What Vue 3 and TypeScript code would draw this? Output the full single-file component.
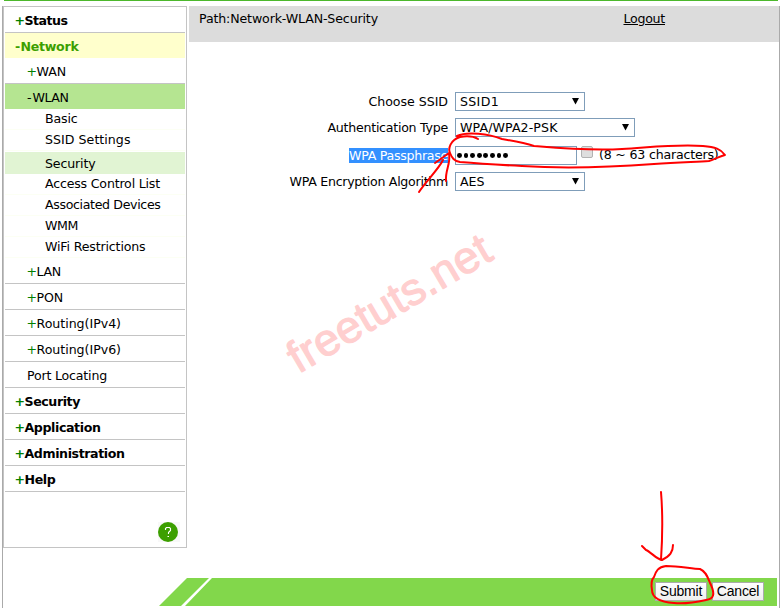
<script setup lang="ts">
interface NavItem {
  label: string
  mark?: string
  kind: string
  width: number
}

const nav: NavItem[] = [
  { mark: '+', label: 'Status', kind: 'top', width: 43 },
  { mark: '-', label: 'Network', kind: 'top open', width: 58 },
  { mark: '+', label: 'WAN', kind: 'sub', width: 29.5 },
  { mark: '-', label: 'WLAN', kind: 'sub active', width: 36 },
  { label: 'Basic', kind: 'leaf', width: 32.5 },
  { label: 'SSID Settings', kind: 'leaf', width: 85.5 },
  { label: 'Security', kind: 'leaf selected', width: 50.5 },
  { label: 'Access Control List', kind: 'leaf', width: 115 },
  { label: 'Associated Devices', kind: 'leaf', width: 115.5 },
  { label: 'WMM', kind: 'leaf', width: 33 },
  { label: 'WiFi Restrictions', kind: 'leaf', width: 100.5 },
  { mark: '+', label: 'LAN', kind: 'sub', width: 24.5 },
  { mark: '+', label: 'PON', kind: 'sub', width: 26.5 },
  { mark: '+', label: 'Routing(IPv4)', kind: 'sub', width: 84.5 },
  { mark: '+', label: 'Routing(IPv6)', kind: 'sub', width: 84.5 },
  { label: 'Port Locating', kind: 'sub', width: 80 },
  { mark: '+', label: 'Security', kind: 'top', width: 55.5 },
  { mark: '+', label: 'Application', kind: 'top', width: 76 },
  { mark: '+', label: 'Administration', kind: 'top', width: 100 },
  { mark: '+', label: 'Help', kind: 'top', width: 31 },
]

// Spreads the letters of a text so that it takes up the given width.
const vFit = {
  mounted(el: HTMLElement, binding: { value: number }) {
    const count = (el.textContent ?? '').length
    const natural = el.getBoundingClientRect().width
    if (count > 0) el.style.letterSpacing = `${(binding.value - natural) / count}px`
  },
}
</script>

<template>
  <div class="page">
    <div class="topline"></div>
    <div class="body">
      <aside class="sidebar">
        <nav>
          <div v-for="(item, i) in nav" :key="i" class="row" :class="item.kind">
            <span v-if="item.mark" class="mark" :class="{ minus: item.mark === '-' }">{{ item.mark }}</span><span v-fit="item.width">{{ item.label }}</span>
          </div>
        </nav>
        <div class="help">
          <svg width="22" height="20" viewBox="0 0 22 20">
            <rect width="22" height="20" fill="#f8f8f8" />
            <circle cx="10" cy="10" r="10" fill="#3c9f00" />
            <path d="M7.500 8V6.500L8.500 5.500H11.500L12.500 6.500V8.500L10.500 10.500V12M9.500 14.500H11" fill="none" stroke="#fff" stroke-width="1.100" />
          </svg>
        </div>
      </aside>
      <main class="content">
        <header class="path">
          <span v-fit="179">Path:Network-WLAN-Security</span>
          <a v-fit="41.5" class="logout">Logout</a>
        </header>
        <form class="form">
          <label class="label"><span v-fit="79.5">Choose SSID</span></label>
          <div class="field select"><span v-fit="39">SSID1</span><i class="arrow"></i></div>
          <label class="label"><span v-fit="120.5">Authentication Type</span></label>
          <div class="field select wide"><span v-fit="97.5">WPA/WPA2-PSK</span><i class="arrow"></i></div>
          <label class="label"><span v-fit="99" class="hl">WPA Passphrase</span></label>
          <div class="pass">
            <div class="field input"><i v-for="n in 8" :key="n" class="dot"></i></div>
            <span class="check"></span>
            <span v-fit="119.5" class="hint">(8 ~ 63 characters)</span>
          </div>
          <label class="label"><span v-fit="158.5">WPA Encryption Algorithm</span></label>
          <div class="field select"><span v-fit="24.5">AES</span><i class="arrow"></i></div>
        </form>
      </main>
    </div>
    <footer class="footer">
      <svg class="slashes" width="54" height="28" viewBox="0 0 54 28">
        <path d="M0 28L28 0H50L22 28ZM26 28L53 0H54V28Z" fill="#82d74b" />
      </svg>
      <div class="bar">
        <button type="button" class="submit"><span v-fit="42.5">Submit</span></button>
        <button type="button" class="cancel"><span v-fit="42.5">Cancel</span></button>
      </div>
    </footer>
    <svg class="overlay" width="780" height="608" viewBox="0 0 780 608">
      <text class="watermark" transform="translate(298.500 374) rotate(-30.500)" textLength="228" lengthAdjust="spacing">freetuts.net</text>
      <g class="ink">
        <path d="M478 139C473 136 466 136 460 137C450 140 448 149 450 153C452 158 454 161 460 162C483 164 502 165 522 166C568 169 613 167 654 164C679 162 697 162 709 161C716 159 720 156 725 155C721 149 715 147 703 146C678 144 654 147 622 149C591 151 558 148 534 146C525 143 514 141 502 139C489 134 467 131 457 136" />
        <path d="M419 192C426 181 438 170 443 160M435 163L449 153C451 164 445 170 446 181" />
        <path d="M661 492C663 516 662 545 661 560M642 546L646 550C651 552 656 559 662 560C670 556 673 552 673 545" />
        <path d="M654 577C656 571 658 567 666 566C680 566 692 569 700 569C707 572 708 579 711 585C715 594 714 599 706 600C697 602 683 604 674 603C661 602 652 599 652 590C651 584 652 579 654 577Z" />
      </g>
    </svg>
  </div>
</template>

<style>
html, body { margin: 0; background: #fff; overflow: hidden; }
</style>

<style scoped>
* { box-sizing: border-box; }
.page {
  position: relative;
  width: 780px;
  height: 608px;
  overflow: hidden;
  background: #fff;
  font: 12.6px/20px "DejaVu Sans", Verdana, sans-serif;
  color: #000;
  display: flex;
  flex-direction: column;
  white-space: nowrap;
}
.topline { height: 1px; margin: 0 2px 5px 4px; background: #4cb82c; flex: none; }
.body {
  display: flex;
  height: 572px;
  flex: none;
  margin-left: 2px;
  border-left: 1px solid #aaa;
  border-right: 1px solid #aaa;
}
.sidebar {
  width: 184px;
  height: 542px;
  border: 1px solid #c4c4c4;
  padding: 0 1px;
  display: flex;
  flex-direction: column;
}
.row {
  height: 26px;
  line-height: 27px;
  border-bottom: 1px solid #c4c4c4;
  overflow: hidden;
}
.top { padding-left: 10px; font-weight: bold; }
.mark { display: inline-block; width: 9.5px; color: #008000; }
.sub .mark:not(.minus) { text-indent: -0.5px; }
.top .mark:not(.minus) { text-indent: -0.5px; }
.mark.minus { width: 5.5px; }
.open { background: #ffc; color: #3c9f00; border: 0; height: 25px; }
.open .mark { color: #3c9f00; }
.sub { padding-left: 22px; }
.sub .minus { color: #000; }
.active { background: #b5e591; border: 0; height: 25px; line-height: 28px; }
.leaf { padding-left: 40px; height: 21px; line-height: 20px; border-color: #fcfff4; }
.selected { height: 22px; line-height: 24px; margin-top: 1px; background: #e1f4d3; border: 0; }
.help { display: flex; justify-content: flex-end; margin-top: 30px; padding-right: 5px; }
.content { flex: 1; margin-left: 2px; }
.path {
  height: 36px;
  background: #dcdcdc;
  padding: 3px 114px 0 10px;
  display: flex;
  justify-content: space-between;
}
.logout { text-decoration: underline; }
.form {
  display: grid;
  grid-template-columns: 259px auto;
  grid-template-rows: 26px 28px 26px 19px;
  column-gap: 7px;
  justify-content: start;
  padding-top: 50px;
}
.label { text-align: right; line-height: 19px; }
.hl { display: inline-block; background: #3390ff; color: #fff; height: 15px; line-height: 15px; }
.field { width: 130px; height: 19px; border: 1px solid #7f9db9; background: #fff; line-height: 18px; }
.select { display: flex; justify-content: space-between; align-items: flex-start; padding: 0 5px 0 4px; }
.wide { width: 180px; }
.arrow { width: 7px; height: 6.5px; margin-top: 5px; background: #000; clip-path: polygon(0 0, 100% 0, 50% 100%); }
.pass { display: flex; }
.input { width: 122px; display: flex; align-items: center; padding: 0 1px; gap: 1.8px; }
.dot { width: 4.8px; height: 4.8px; border-radius: 50%; background: #000; }
.check { width: 12px; height: 12px; margin-left: 4px; border: 1px solid #b2b2b2; border-radius: 2px; background: #dedede; }
.hint { margin-left: 6px; line-height: 18px; }
.footer { display: flex; flex: none; height: 30px; margin-left: 2px; padding-left: 156px; border-left: 1px solid #aaa; border-right: 1px solid #aaa; }
.slashes { flex: none; display: block; }
.bar { width: 564px; height: 28px; background: #82d74b; display: flex; justify-content: flex-end; padding: 4px 13px 0 0; gap: 5px; }
button {
  height: 19px;
  padding: 0;
  border: 1px solid #ababab;
  background: linear-gradient(#fff, #eee);
  color: #000;
  font: 14px/17px "Liberation Sans", Arial, sans-serif;
}
.submit { width: 52px; }
.cancel { width: 52px; }
.overlay { position: absolute; inset: 0; pointer-events: none; }
.watermark { font: 45px "Liberation Sans", Arial, sans-serif; fill: #ffcfcf; stroke: #ffcfcf; stroke-width: 1.2; stroke-linejoin: round; }
.ink { fill: none; stroke: #f00; stroke-width: 2; stroke-linecap: round; stroke-linejoin: round; }
</style>
